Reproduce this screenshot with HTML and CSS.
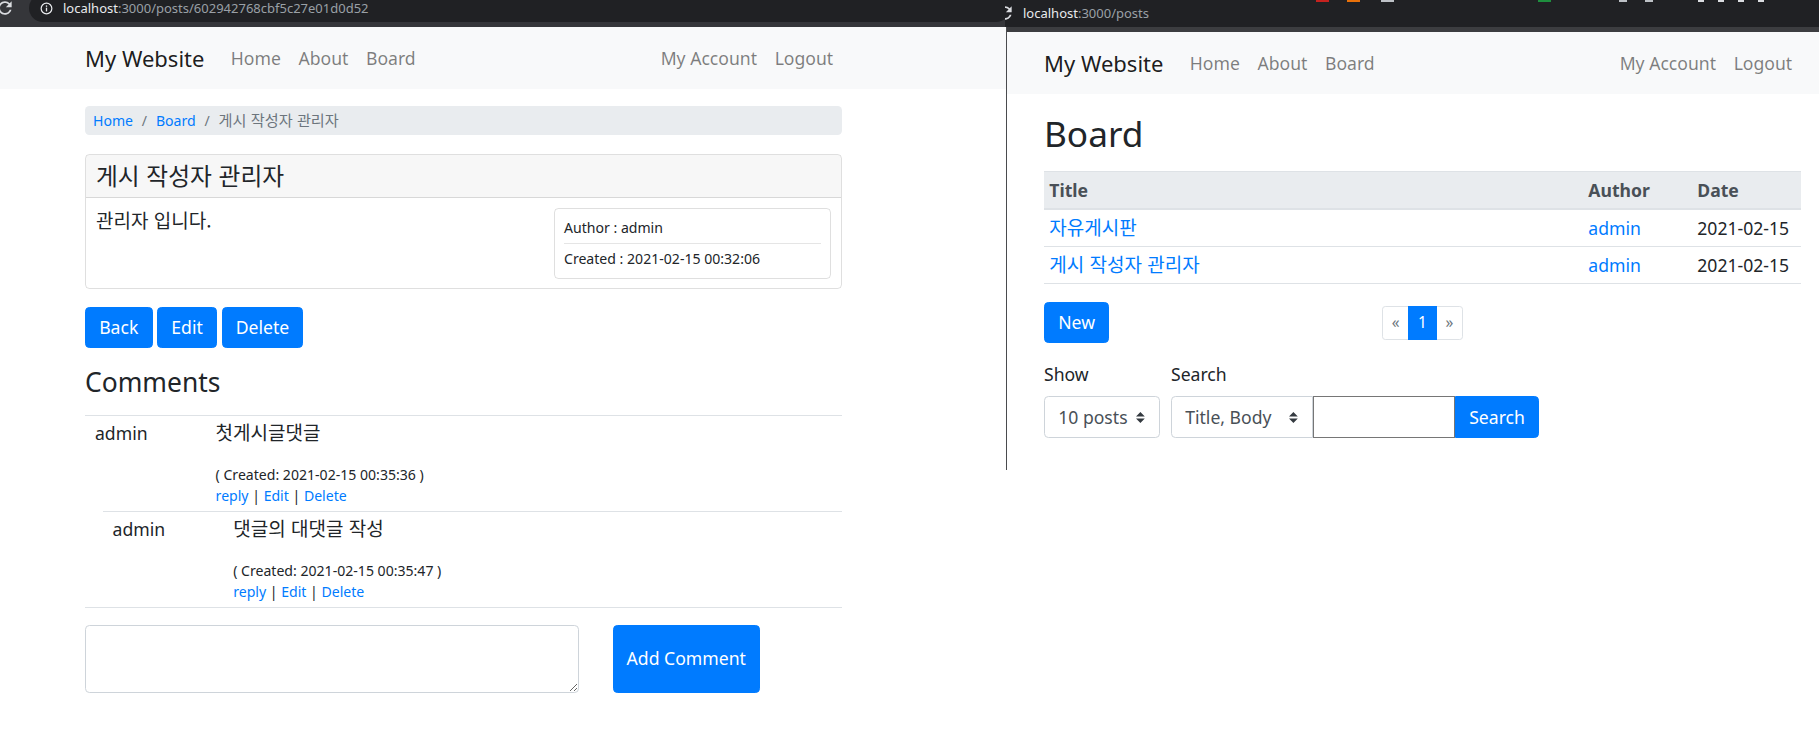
FILE: index.html
```html
<!DOCTYPE html>
<html lang="ko">
<head>
<meta charset="utf-8">
<title>My Website</title>
<link rel="stylesheet" href="styles.css">
</head>
<body>
<main class="desktop">

  <section class="window win-left">
    <header class="chrome-left">
      <svg class="reload reload-left" viewBox="0 0 24 24" aria-hidden="true"><path d="M17.65 6.35C16.2 4.9 14.21 4 12 4c-4.42 0-7.99 3.58-7.99 8s3.57 8 7.99 8c3.73 0 6.84-2.55 7.73-6h-2.08c-.82 2.33-3.04 4-5.650 4-3.31 0-6-2.69-6-6s2.69-6 6-6c1.66 0 3.14.69 4.22 1.78L13 11h7V4l-2.35 2.35z"/></svg>
      <div class="omnibox">
        <svg class="info" viewBox="0 0 16 16" aria-hidden="true"><circle cx="8" cy="8" r="6.6" fill="none" stroke="currentColor" stroke-width="1.5"/><rect x="7.2" y="7" width="1.6" height="4.6" fill="currentColor"/><rect x="7.2" y="4.2" width="1.6" height="1.7" fill="currentColor"/></svg>
        <span class="url"><span class="host">localhost</span>:3000/posts/602942768cbf5c27e01d0d52</span>
      </div>
    </header>

    <div class="page">
      <nav class="navbar">
        <div class="container navbar-inner">
          <a class="brand" href="#">My Website</a>
          <ul class="nav">
            <li><a href="#">Home</a></li>
            <li><a href="#">About</a></li>
            <li><a href="#">Board</a></li>
          </ul>
          <ul class="nav nav-right">
            <li><a href="#">My Account</a></li>
            <li><a href="#">Logout</a></li>
          </ul>
        </div>
      </nav>

      <div class="container">
        <ol class="breadcrumb">
          <li><a href="#">Home</a></li>
          <li><a href="#">Board</a></li>
          <li class="active"><span class="ko">게시 작성자 관리자</span></li>
        </ol>

        <article class="card">
          <div class="card-header"><span class="ko">게시 작성자 관리자</span></div>
          <div class="card-body">
            <div class="post-text"><span class="ko">관리자 입니다.</span></div>
            <div class="meta">
              <div>Author : admin</div>
              <hr>
              <div>Created : 2021-02-15 00:32:06</div>
            </div>
          </div>
        </article>

        <div class="actions">
          <a class="btn" href="#">Back</a>
          <a class="btn" href="#">Edit</a>
          <a class="btn" href="#">Delete</a>
        </div>

        <h4 class="comments-title">Comments</h4>

        <div class="comment-list">
          <div class="comment">
            <div class="c-author">admin</div>
            <div class="c-main">
              <p class="c-text"><span class="ko">첫게시글댓글</span></p>
              <div class="c-small">( Created: 2021-02-15 00:35:36 )</div>
              <div class="c-small"><a href="#">reply</a> | <a href="#">Edit</a> | <a href="#">Delete</a></div>
            </div>
          </div>
          <div class="comment reply">
            <div class="c-author">admin</div>
            <div class="c-main">
              <p class="c-text"><span class="ko">댓글의 대댓글 작성</span></p>
              <div class="c-small">( Created: 2021-02-15 00:35:47 )</div>
              <div class="c-small"><a href="#">reply</a> | <a href="#">Edit</a> | <a href="#">Delete</a></div>
            </div>
          </div>
        </div>

        <form class="comment-form">
          <textarea class="form-control" rows="2"></textarea>
          <button class="btn btn-add" type="button">Add Comment</button>
        </form>
      </div>
    </div>
  </section>

  <section class="window win-right">
    <header class="chrome-right">
      <div class="tab-bits"><i class="bit red"></i><i class="bit orange"></i><i class="bit light"></i><i class="bit green"></i><i class="bit light small"></i><i class="bit light small"></i><i class="bit light tiny"></i><i class="bit light tiny"></i><i class="bit light tiny"></i><i class="bit light tiny"></i></div>
      <svg class="reload reload-right" viewBox="0 0 24 24" aria-hidden="true"><path d="M17.65 6.35C16.2 4.9 14.21 4 12 4c-4.42 0-7.99 3.58-7.99 8s3.57 8 7.99 8c3.73 0 6.84-2.55 7.73-6h-2.08c-.82 2.33-3.04 4-5.65 4-3.31 0-6-2.69-6-6s2.69-6 6-6c1.66 0 3.14.69 4.22 1.78L13 11h7V4l-2.35 2.35z"/></svg>
      <span class="url"><span class="host">localhost</span>:3000/posts</span>
    </header>
    <div class="frame">
      <div class="band"></div>
      <nav class="navbar">
        <div class="container navbar-inner">
          <a class="brand" href="#">My Website</a>
          <ul class="nav">
            <li><a href="#">Home</a></li>
            <li><a href="#">About</a></li>
            <li><a href="#">Board</a></li>
          </ul>
          <ul class="nav nav-right">
            <li><a href="#">My Account</a></li>
            <li><a href="#">Logout</a></li>
          </ul>
        </div>
      </nav>

      <div class="container">
        <h1 class="board-title">Board</h1>
        <table class="table">
          <thead>
            <tr><th class="col-title">Title</th><th class="col-author">Author</th><th class="col-date">Date</th></tr>
          </thead>
          <tbody>
            <tr><td><a href="#"><span class="ko">자유게시판</span></a></td><td><a href="#">admin</a></td><td>2021-02-15</td></tr>
            <tr><td><a href="#"><span class="ko">게시 작성자 관리자</span></a></td><td><a href="#">admin</a></td><td>2021-02-15</td></tr>
          </tbody>
        </table>

        <div class="list-actions">
          <a class="btn btn-new" href="#">New</a>
          <ul class="pagination">
            <li class="page-item first"><a class="page-link" href="#">«</a></li>
            <li class="page-item active"><a class="page-link" href="#">1</a></li>
            <li class="page-item last"><a class="page-link" href="#">»</a></li>
          </ul>
        </div>

        <form class="search-form">
          <div class="field">
            <label>Show</label>
            <div class="select select-show"><span>10 posts</span><svg class="arrows" viewBox="0 0 4 5" aria-hidden="true"><path d="M2 0L0 2h4zm0 5L0 3h4z"/></svg></div>
          </div>
          <div class="field">
            <label>Search</label>
            <div class="input-group">
              <div class="select select-field"><span>Title, Body</span><svg class="arrows" viewBox="0 0 4 5" aria-hidden="true"><path d="M2 0L0 2h4zm0 5L0 3h4z"/></svg></div>
              <input class="search-input" type="text">
              <button class="btn btn-search" type="button">Search</button>
            </div>
          </div>
        </form>
      </div>
    </div>
  </section>

</main>
</body>
</html>
```

FILE: styles.css
```css
* { box-sizing: border-box; }

html, body { margin: 0; padding: 0; }

body {
  width: 1819px;
  height: 733px;
  overflow: hidden;
  background: #fff;
  font-family: "Noto Sans", "Noto Sans CJK KR", sans-serif;
  font-size: 17.6px;
  line-height: 1.5;
  color: #212529;
}

a { color: #007bff; text-decoration: none; }
ul, ol { list-style: none; margin: 0; padding: 0; }
p { margin: 0; }
h1, h4 { margin: 0; font-weight: 400; }

.ko {
  font-family: "Noto Sans CJK KR", sans-serif;
  font-size: 1.08em;
  line-height: 1;
}

/* ---------- desktop / windows ---------- */
.desktop { position: relative; width: 1819px; height: 733px; }
.window { position: absolute; top: 0; }
.win-left { left: 0; width: 1010px; height: 733px; background: #fff; }
.win-right { left: 1005px; width: 814px; height: 470px; }

/* ---------- browser chrome ---------- */
.chrome-left {
  display: flex;
  align-items: flex-start;
  height: 27px;
  background: #35363a;
  overflow: hidden;
}
.reload { width: 20px; height: 20px; flex: none; fill: #dadce0; }
.reload-left { margin: -2px 0 0 -5px; }
.omnibox {
  display: flex;
  align-items: center;
  gap: 10px;
  flex: 1;
  height: 28px;
  margin: -6px 0 0 14px;
  padding-left: 11px;
  border-radius: 14px;
  background: #202124;
}
.info { width: 13px; height: 13px; flex: none; color: #e8eaed; }
.url { font-size: 13px; line-height: 17px; color: #9aa0a6; white-space: nowrap; }
.host { color: #e8eaed; }

.chrome-right {
  position: relative;
  display: flex;
  align-items: center;
  height: 27px;
  background: #202124;
  overflow: hidden;
}
.reload-right { align-self: flex-start; margin: 2.7px 0 0 -10px; }
.chrome-right .url { margin-left: 8px; padding-top: 0; }
.tab-bits { position: absolute; top: 0; left: 311px; display: flex; align-items: flex-start; }
.bit { display: block; height: 2px; width: 13px; margin-right: 18px; }
.bit.red { background: #c5221f; }
.bit.orange { background: #e8710a; margin-right: 21px; }
.bit.light { background: #bdc1c6; }
.bit.orange + .bit.light { margin-right: 144px; }
.bit.green { background: #1e8e3e; margin-right: 68px; }
.bit.small { width: 8px; }
.bit.tiny { width: 6px; margin-right: 14px; background: #dadce0; }
.bit.small + .bit.small { margin-right: 45px; }

.frame {
  height: 443px;
  margin-left: 1px;
  border-left: 1px solid #4a4b4e;
  background: #fff;
}
.band { height: 5px; background: #3c3d40; }

/* ---------- page / navbar ---------- */
.container { width: 757px; }
.win-left .container { margin-left: 85px; }
.win-right .container { margin-left: 37px; }

.navbar { height: 62px; background: #f8f9fa; }
.navbar-inner { display: flex; align-items: center; height: 100%; }
.brand {
  margin-right: 17.6px;
  font-size: 22px;
  line-height: 33px;
  color: rgba(0, 0, 0, .9);
  white-space: nowrap;
}
.nav { display: flex; }
.nav a {
  display: block;
  padding: 0 8.8px;
  line-height: 26.4px;
  color: rgba(0, 0, 0, .5);
  white-space: nowrap;
}
.nav-right { margin-left: auto; }

/* ---------- post page ---------- */
.breadcrumb {
  display: flex;
  margin: 17.3px 0 19px;
  padding: 4px 8px;
  background: #e9ecef;
  border-radius: 4.4px;
  font-size: 14.08px;
  line-height: 21px;
}
.breadcrumb li + li { padding-left: 8.8px; }
.breadcrumb li + li::before { content: "/"; padding-right: 8.8px; color: #6c757d; }
.breadcrumb .active { color: #6c757d; }

.card {
  border: 1px solid rgba(0, 0, 0, .125);
  border-radius: 4.4px;
  overflow: hidden;
}
.card-header {
  height: 43px;
  padding: 0 10px;
  font-size: 22px;
  line-height: 42px;
  background: rgba(0, 0, 0, .03);
  border-bottom: 1px solid rgba(0, 0, 0, .125);
}
.card-body {
  display: flex;
  justify-content: space-between;
  align-items: flex-start;
  padding: 10px 10px 9px;
}
.post-text { line-height: 26.4px; }
.meta {
  width: 277px;
  padding: 7.5px 9px 8.8px;
  border: 1px solid rgba(0, 0, 0, .125);
  border-radius: 4.4px;
  font-size: 14.08px;
  line-height: 21.1px;
}
.meta hr {
  margin: 5px 0 4.5px;
  border: 0;
  border-top: 1px solid rgba(0, 0, 0, .1);
}

.btn {
  display: inline-block;
  padding: 6.6px 13.2px;
  font-family: inherit;
  font-size: 17.6px;
  line-height: 26.4px;
  color: #fff;
  background: #007bff;
  border: 1px solid #007bff;
  border-radius: 4.4px;
  white-space: nowrap;
}

.actions { display: flex; gap: 4.6px; margin-top: 17.6px; }

.comments-title {
  margin: 18.2px 0 16.7px;
  font-size: 26.4px;
  line-height: 31.7px;
}

.comment-list { border-bottom: 1px solid #dee2e6; }
.comment {
  display: flex;
  padding: 4.4px 0;
  border-top: 1px solid #dee2e6;
}
.comment.reply { margin-left: 17.6px; }
.c-author { flex: none; width: 120.6px; padding-left: 10px; line-height: 26.4px; }
.c-main { padding-left: 10px; }
.c-text { margin-bottom: 17.6px; line-height: 26.4px; }
.c-small { font-size: 14.08px; line-height: 21px; }

.comment-form { display: flex; gap: 34px; margin-top: 17px; }
.form-control {
  width: 494px;
  height: 68px;
  padding: 6.6px 13.2px;
  font-family: inherit;
  font-size: 17.6px;
  border: 1px solid #ced4da;
  border-radius: 4.4px;
  background: #fff;
}
.btn-add { width: 146.5px; height: 68px; padding: 0; text-align: center; }

/* ---------- board page ---------- */
.board-title {
  margin: 17.6px 0 17.2px;
  font-size: 35.2px;
  line-height: 42.2px;
}

.table {
  width: 757px;
  table-layout: fixed;
  border-collapse: separate;
  border-spacing: 0;
  border-bottom: 1px solid #dee2e6;
}
.table th, .table td {
  padding: 4.8px 5.28px;
  text-align: left;
  vertical-align: top;
  line-height: 26.4px;
  border-top: 1px solid #dee2e6;
}
.table thead th {
  padding: 4.95px 5.28px;
  font-weight: 700;
  color: #495057;
  background: #e9ecef;
  border-bottom: 1px solid #dee2e6;
}
.col-title { width: 539px; }
.col-author { width: 109px; }
.col-date { width: 109px; }
.table td { white-space: nowrap; }

.list-actions {
  display: grid;
  grid-template-columns: 1fr auto 1fr;
  align-items: center;
  margin-top: 17.6px;
}
.btn-new { justify-self: start; }
.pagination { display: flex; }
.page-item { position: relative; }
.page-link {
  display: block;
  margin-left: -1px;
  padding: 4.4px 8.8px;
  font-size: 15.4px;
  line-height: 23.1px;
  color: #6c757d;
  background: #fff;
  border: 1px solid #dee2e6;
}
.page-item.first .page-link { margin-left: 0; border-radius: 3.3px 0 0 3.3px; }
.page-item.last .page-link { border-radius: 0 3.3px 3.3px 0; }
.page-item.active { z-index: 1; }
.page-item.active .page-link { color: #fff; background: #007bff; border-color: #007bff; }

.search-form { display: flex; gap: 11px; margin-top: 17.6px; }
.field label { display: block; margin-bottom: 8.8px; line-height: 26.4px; }
.select {
  display: flex;
  align-items: center;
  justify-content: space-between;
  height: 41.8px;
  padding: 0 14.5px 0 13.2px;
  color: #495057;
  background: #fff;
  border: 1px solid #ced4da;
  border-radius: 4.4px;
  white-space: nowrap;
}
.arrows { width: 8.8px; height: 11px; fill: #343a40; flex: none; }
.select-show { width: 116px; }
.input-group { display: flex; }
.select-field { width: 142px; border-radius: 4.4px 0 0 4.4px; }
.search-input {
  width: 142px;
  height: 41.8px;
  margin: 0;
  padding: 0 6px;
  font-family: inherit;
  font-size: 17.6px;
  border: 1px solid #767676;
  border-radius: 0;
  background: #fff;
}
.btn-search { height: 41.8px; border-radius: 0 4.4px 4.4px 0; }
```
